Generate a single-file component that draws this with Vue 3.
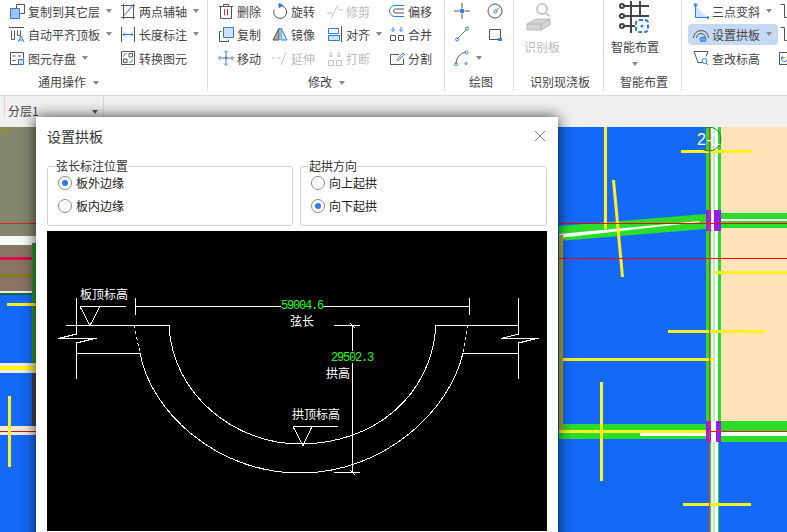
<script setup>
const D = '#555'
const B = '#2b7de9'
const L = '#cfe2fa'
const G = '#c4c4c4'

// [stroke, path, fill]
const icons = {
  copyLayer: [[D, 'M7.5 1.5h8v9h-8z'], [B, 'M1.5 5.5h9v10h-9z', '#9cc4f5']],
  twoAxis: [[D, 'M1 2.5h14M1 14.5h14M3.5 1v15M13.5 1v15'], [B, 'M2 15L14 1']],
  autoFlush: [[D, 'M0 1.5h15M2.5 4.5v9h3v-9M8.5 4.5v5h3v-5'], [B, 'M9 16l3-6 3 6M10 14h4']],
  length: [[D, 'M1.5 1v15M14.5 1v15'], [B, 'M3 8.5h10M5 6.5l-2 2 2 2M11 6.5l2 2-2 2']],
  saveEl: [[D, 'M1.5 2.5h13v6M9 14.5H1.5v-12M3.5 6h3M9 6h3M3.5 10.5h3'], [B, 'M9.5 9.5h5v5h-5z', L]],
  convert: [[D, 'M1.5 1.5h13v13h-13zM9 3.5h3.5V7H9zM3.5 9H7v3.5H3.5z'], [B, 'M3.5 6.5a3 3 0 0 1 3-3M12.5 9.5a3 3 0 0 1-3 3']],
  del: [[D, 'M1 3.5h14M5.5 3V1.5h5V3M2.5 3.5v12h11v-12'], ['#e0343c', 'M6.5 6v6.5M9.5 6v6.5']],
  rotate: [[D, 'M8.5 2.5a6.5 6.5 0 1 1-6.3 4'], [B, 'M7 .5l4 2-4 2z', B]],
  trim: [[G, 'M0 10h5M4 15L11 2M11 7h5']],
  offset: [[B, 'M15 2.5H6a5.5 5.5 0 0 0 0 11h9'], [D, 'M15 6H6.5a2 2 0 0 0 0 4H15']],
  copy: [[D, 'M3.5 5.5h-2v10h9v-2'], [B, 'M5.5 1.5h10v10h-10z', L]],
  mirror: [[D, 'M7 2L1 14h6z', '#aaa'], [B, 'M9 2l6 12H9z', L]],
  align: [[B, 'M1.5 2.5h10v5h-10z'], [B, 'M1.5 9.5h11v5h-11z', L], [D, 'M14.5 0v16']],
  merge: [[D, 'M1.5 9.5h5v5h-5zM9.5 9.5h5v5h-5z'], [B, 'M4 1v4M2 3.5l2 2 2-2M12 1v4M10 3.5l2 2 2-2']],
  move: [[B, 'M8 2v4M8 10v4M2 8h4M10 8h4M6 2.5L8 .5l2 2M6 13.5l2 2 2-2M2.5 6l-2 2 2 2M13.5 6l2 2-2 2'], [D, 'M6 8h4M8 6v4']],
  extend: [[G, 'M0 8h3M5 8h4M9 15L14 2']],
  breakEl: [[G, 'M1.5 10.5h5v5h-5zM9.5 10.5h5v5h-5zM4 2v5M2 5l2 2 2-2M12 2v5M10 5l2 2 2-2']],
  split: [[D, 'M10 4.5H1.5v10h13v-6'], [B, 'M8 10l6-7 1.5 1.5-6 6z']],
  point: [[D, 'M8 0v5M8 11v5M0 8h5M11 8h5'], [B, 'M6 8a2 2 0 1 0 4 0a2 2 0 1 0-4 0', B]],
  circle: [[D, 'M1 8a7 7 0 1 0 14 0a7 7 0 1 0-14 0'], [B, 'M7 8.5a1.5 1.5 0 1 0 3 0a1.5 1.5 0 1 0-3 0M9 7.5l3-3']],
  line: [[B, 'M3 13L13 3M1.5 13.5a1.5 1.5 0 1 0 3 0a1.5 1.5 0 1 0-3 0M11.5 2.5a1.5 1.5 0 1 0 3 0a1.5 1.5 0 1 0-3 0']],
  rect: [[D, 'M2.5 3.5h11v10h-11z'], [B, 'M11.5 12.5h3v2h-3z', B]],
  arc: [[D, 'M2 14C2 8 6 3 12 2'], [B, 'M.5 14.5a1.5 1.5 0 1 0 3 0a1.5 1.5 0 1 0-3 0M11 2.5a1.5 1.5 0 1 0 3 0a1.5 1.5 0 1 0-3 0M11 13.5a1 1 0 1 0 2 0a1 1 0 1 0-2 0']],
  threePoint: [['none', 'M3 3l11 11H3z', L], [B, 'M2.5 1v13.5h13M1 2a1 1 0 1 0 3 0a1 1 0 1 0-3 0M14 14.5a1 1 0 1 0 2 0a1 1 0 1 0-2 0']],
  setArch: [[D, 'M.5 12a7.5 7.5 0 0 1 15 0M3.5 12a4.5 4.5 0 0 1 9 0'], [B, 'M7 13.5a3 2.5 0 1 0 6 0a3 2.5 0 1 0-6 0', '#6fa5ec']],
  editElev: [[D, 'M1 1.5h14l-2 5M1 1.5l4 11h4'], [B, 'M9 11a2.5 2.5 0 1 0 5 0a2.5 2.5 0 1 0-5 0M13 13l2 2']],
  stairA: [[D, 'M2.5 1.5h4v13h8']],
  stairB: [[D, 'M2.5 1.5h4v13h8']],
  box: [[D, 'M1.5 2.5h12v12h-12zM3.5 8h3'], [B, 'M5 6a3 3 0 1 0 4 4']],
}

const general = [
  { icon: 'copyLayer', text: '复制到其它层', caret: true },
  { icon: 'twoAxis', text: '两点辅轴', caret: true },
  { icon: 'autoFlush', text: '自动平齐顶板', caret: true },
  { icon: 'length', text: '长度标注', caret: true },
  { icon: 'saveEl', text: '图元存盘', caret: true },
  { icon: 'convert', text: '转换图元' },
]
const modify = [
  { icon: 'del', text: '删除' },
  { icon: 'rotate', text: '旋转' },
  { icon: 'trim', text: '修剪', off: true },
  { icon: 'offset', text: '偏移' },
  { icon: 'copy', text: '复制' },
  { icon: 'mirror', text: '镜像' },
  { icon: 'align', text: '对齐', caret: true },
  { icon: 'merge', text: '合并' },
  { icon: 'move', text: '移动' },
  { icon: 'extend', text: '延伸', off: true },
  { icon: 'breakEl', text: '打断', off: true },
  { icon: 'split', text: '分割' },
]
const draw = [
  { icon: 'point' },
  { icon: 'circle' },
  { icon: 'line' },
  { icon: 'rect' },
  { icon: 'arc', caret: true },
]
const arch = [
  { icon: 'threePoint', text: '三点变斜', caret: true },
  { icon: 'stairA' },
  { icon: 'setArch', text: '设置拱板', caret: true, active: true },
  { icon: 'stairB' },
  { icon: 'editElev', text: '查改标高' },
  { icon: 'box' },
]
const groups = [
  { cls: 'g-general', items: general, title: '通用操作', caret: true },
  { cls: 'g-modify', items: modify, title: '修改', caret: true },
  { cls: 'g-draw', items: draw, title: '绘图' },
]
const fieldsets = [
  { legend: '弦长标注位置', options: [{ text: '板外边缘', on: true }, { text: '板内边缘' }] },
  { legend: '起拱方向', options: [{ text: '向上起拱' }, { text: '向下起拱', on: true }] },
]
</script>

<template>
  <div class="page">
    <div class="ribbon">
      <section v-for="g in groups" :key="g.title" class="group" :class="g.cls">
        <div class="items">
          <div v-for="(it, i) in g.items" :key="i" class="item" :class="{ off: it.off }">
            <svg class="ico" viewBox="0 0 16 16">
              <path v-for="(p, j) in icons[it.icon]" :key="j" :stroke="p[0]" :d="p[1]" :fill="p[2] || 'none'" />
            </svg>
            <span v-if="it.text">{{ it.text }}</span>
            <i v-if="it.caret" class="caret"></i>
          </div>
        </div>
        <div class="title">{{ g.title }}<i v-if="g.caret" class="caret title-caret"></i></div>
      </section>

      <section class="group g-recog">
        <div class="big off">
          <svg width="36" height="34" viewBox="0 0 36 34">
            <circle cx="18" cy="9" r="5" fill="none" stroke="#c8c8c8" stroke-width="2" />
            <path d="M22 13l3 3" stroke="#c8c8c8" stroke-width="2" />
            <path d="M3 24l9-5h14l-9 5zM3 24h14v6H3zM17 24l9-5v6l-9 5z" fill="#d4d4d4" stroke="#bbb" />
          </svg>
          <span>识别板</span>
        </div>
        <div class="title">识别现浇板</div>
      </section>

      <section class="group g-smart">
        <div class="big">
          <svg width="36" height="34" viewBox="0 0 36 34">
            <g fill="none" stroke="#444" stroke-width="2">
              <path d="M7 6h25M7 16h25M7 26h11M14 1v32M23 1v16" />
              <circle cx="5" cy="6" r="2" />
              <circle cx="5" cy="16" r="2" />
              <circle cx="5" cy="26" r="2" />
            </g>
            <rect x="19" y="20" width="12" height="12" rx="3" fill="#fff" stroke="#2b7de9" stroke-width="2" stroke-dasharray="4 2" />
            <circle cx="25" cy="26" r="1.5" fill="#2b7de9" />
          </svg>
          <span>智能布置</span>
          <i class="caret big-caret"></i>
        </div>
        <div class="title">智能布置</div>
      </section>

      <section class="group g-arch">
        <div class="items">
          <div v-for="(it, i) in arch" :key="i" class="item" :class="{ active: it.active }">
            <svg class="ico" viewBox="0 0 16 16">
              <path v-for="(p, j) in icons[it.icon]" :key="j" :stroke="p[0]" :d="p[1]" :fill="p[2] || 'none'" />
            </svg>
            <span v-if="it.text">{{ it.text }}</span>
            <i v-if="it.caret" class="caret"></i>
          </div>
        </div>
      </section>
    </div>

    <div class="toolbar">
      <div class="layer">分层1<i class="caret"></i></div>
    </div>

    <svg class="canvas" viewBox="0 127 787 405" width="787" height="405">
      <rect x="0" y="127" width="787" height="405" fill="#1469f8" />
      <!-- left of the dialog -->
      <rect x="0" y="127" width="36" height="109" fill="#85866e" />
      <rect x="0" y="130" width="10" height="3" fill="#8f8f30" />
      <rect x="0" y="223" width="36" height="1" fill="#d8202a" />
      <rect x="0" y="236" width="36" height="9" fill="#f4fbf8" />
      <rect x="0" y="245" width="36" height="46" fill="#8a7463" />
      <rect x="0" y="257" width="36" height="3" fill="#d0104a" />
      <rect x="0" y="274" width="36" height="3" fill="#807c20" />
      <rect x="0" y="291" width="36" height="2" fill="#e8efe8" />
      <rect x="0" y="293" width="36" height="2" fill="#1c6a28" />
      <rect x="32" y="243" width="4" height="122" fill="#2a9a30" />
      <rect x="7" y="303" width="29" height="3" fill="#fff01e" />
      <rect x="0" y="363" width="36" height="10" fill="#f1ead8" />
      <rect x="0" y="366" width="36" height="4" fill="#fff21e" />
      <rect x="32" y="373" width="4" height="53" fill="#44464e" />
      <rect x="0" y="426" width="36" height="9" fill="#f8e8d0" />
      <rect x="0" y="431" width="36" height="1" fill="#b02020" />
      <rect x="8" y="396" width="3" height="71" fill="#fff01e" />

      <!-- right of the dialog -->
      <rect x="721" y="127" width="66" height="294" fill="#fde3b7" />
      <rect x="706" y="127" width="15" height="315" fill="#2bdc2b" />
      <rect x="711" y="127" width="7" height="405" fill="#fff" />
      <rect x="713" y="127" width="2" height="405" fill="#b8f0b8" />
      <rect x="709" y="442" width="2" height="90" fill="#2bdc2b" />
      <rect x="718" y="442" width="1" height="90" fill="#2bdc2b" />
      <polygon points="559,226 706,214 706,229 559,241" fill="#2bdc2b" />
      <polygon points="559,234 700,221 700,222 559,238" fill="#fff" />
      <rect x="721" y="213" width="66" height="15" fill="#2bdc2b" />
      <rect x="721" y="219" width="66" height="2" fill="#fff" />
      <rect x="706" y="210" width="15" height="21" fill="#9a1cf0" />
      <rect x="711" y="210" width="3" height="21" fill="#fff" />
      <rect x="559" y="424" width="147" height="15" fill="#2bdc2b" />
      <rect x="721" y="421" width="66" height="21" fill="#2bdc2b" />
      <rect x="640" y="432" width="147" height="4" fill="#fff" />
      <rect x="559" y="430" width="150" height="3" fill="#fff21e" />
      <rect x="706" y="421" width="15" height="21" fill="#9a1cf0" />
      <rect x="711" y="421" width="5" height="21" fill="#fff" />
      <rect x="604" y="127" width="3" height="102" fill="#fff21e" />
      <polygon points="612,180 615,180 624,277 621,277" fill="#fff21e" />
      <rect x="681" y="150" width="71" height="3" fill="#fff21e" />
      <rect x="714" y="271" width="73" height="3" fill="#fff21e" />
      <rect x="668" y="330" width="97" height="3" fill="#fff21e" />
      <rect x="559" y="358" width="155" height="3" fill="#fff21e" />
      <rect x="600" y="382" width="3" height="99" fill="#fff21e" />
      <rect x="683" y="503" width="68" height="3" fill="#fff21e" />
      <rect x="559" y="235" width="4" height="195" fill="#b5a92c" />
      <rect x="559" y="223" width="228" height="1" fill="#f00" />
      <rect x="559" y="258" width="228" height="1" fill="#f00" />
      <rect x="709" y="431" width="78" height="1" fill="#e02020" />
      <rect x="709" y="127" width="1" height="405" fill="#e0402a" />
      <circle cx="709" cy="139" r="12" fill="none" stroke="#128a3a" />
      <text x="697" y="145" class="axis-label">2-1</text>
    </svg>

    <div class="dialog">
      <header class="dialog-head">
        <span>设置拱板</span>
        <svg width="12" height="12" viewBox="0 0 12 12"><path d="M1 1l10 10M11 1L1 11" stroke="#777" fill="none" /></svg>
      </header>
      <div class="options">
        <fieldset v-for="f in fieldsets" :key="f.legend">
          <legend>{{ f.legend }}</legend>
          <label v-for="o in f.options" :key="o.text" class="radio">
            <span class="dot" :class="{ on: o.on }"></span>{{ o.text }}
          </label>
        </fieldset>
      </div>
      <svg class="diagram" viewBox="47 231 500 300" width="500" height="300">
        <g fill="none" stroke="#fff" stroke-width="1">
          <!-- left stub -->
          <path d="M76.5 298v36l-16 4h-3 39l-20 5v36" />
          <path d="M66 325.5h103M76 353.5h64" />
          <path d="M80 306.5h46M80 306.5l10 19 10-19" />
          <!-- right stub -->
          <path d="M518.5 298v36l-15 4h-3 38l-20 5v36" />
          <path d="M436 325.5h82M463 353.5h55" />
          <!-- chord dimension -->
          <path d="M135 306.5h335M135.5 298v17M469.5 298v17" />
          <!-- arcs -->
          <path d="M169 325C172 395 235 444 300 444C375 444 432 395 436 325" />
          <path d="M140 353C150 410 215 473 300 473C385 473 450 410 463 353" />
          <path d="M134 325L140 353M468 325L463 353" stroke-dasharray="3 3" />
          <!-- crown mark -->
          <path d="M293 426.5h45M293 426.5l10 19 9-19" />
          <!-- rise dimension -->
          <path d="M352.5 325v148M334 325.5h26M334 472.5h26M350 323l5 5M350 470l5 5" />
        </g>
        <rect x="281" y="300" width="42" height="12" fill="#000" />
        <rect x="331" y="351" width="42" height="12" fill="#000" />
        <text x="281" y="309" class="dim">59004.6</text>
        <text x="331" y="361" class="dim">29502.3</text>
        <text x="80" y="299" class="note">板顶标高</text>
        <text x="290" y="326" class="note">弦长</text>
        <text x="326" y="378" class="note">拱高</text>
        <text x="292" y="419" class="note">拱顶标高</text>
      </svg>
    </div>
  </div>
</template>

<style>
html, body {
  margin: 0;
  background: #fff;
}
</style>

<style scoped>
.page {
  position: relative;
  width: 787px;
  height: 532px;
  overflow: hidden;
  font-family: "Noto Sans CJK SC", "Noto Sans", sans-serif;
  font-size: 12px;
  color: #444;
  background: #f0f0f0;
}
.ribbon {
  display: flex;
  height: 95px;
  background: #fff;
  border-bottom: 1px solid #dcdcdc;
}
.group {
  box-sizing: border-box;
  flex: none;
  height: 91px;
  border-right: 1px solid #dcdcdc;
  display: flex;
  flex-direction: column;
}
.g-general { width: 208px; padding-left: 9px; }
.g-modify { width: 237px; padding-left: 10px; }
.g-draw { width: 69px; padding-left: 9px; }
.g-recog { width: 90px; padding-left: 10px; }
.g-smart { width: 78px; padding-left: 7px; }
.g-arch { width: 105px; padding-left: 11px; border-right: 0; }
.items {
  display: grid;
  grid-template-rows: 22px 24px 24px;
  height: 73px;
  align-items: center;
}
.g-general .items { grid-template-columns: 111px 1fr; }
.g-modify .items { grid-template-columns: 54px 55px 62px 1fr; }
.g-draw .items { grid-template-columns: 33px 1fr; }
.g-arch .items { grid-template-columns: 85px 9px; }
.item {
  display: flex;
  align-items: center;
  gap: 3px;
  white-space: nowrap;
  color: #444;
}
.item.off, .big.off { color: #bbb; }
.item.active {
  height: 21px;
  margin-left: -5px;
  padding-left: 5px;
  background: #c5daf2;
  border-radius: 4px;
}
.ico {
  width: 16px;
  height: 16px;
  flex: none;
}
.caret {
  display: inline-block;
  width: 0;
  height: 0;
  margin-left: 3px;
  border-left: 3px solid transparent;
  border-right: 3px solid transparent;
  border-top: 4px solid #888;
}
.title {
  height: 18px;
  line-height: 18px;
  white-space: nowrap;
}
.g-general .title { padding-left: 29px; }
.g-modify .title { padding-left: 90px; }
.g-draw .title { padding-left: 15px; }
.g-recog .title { padding-left: 6px; }
.g-smart .title { padding-left: 9px; }
.title-caret { margin-left: 7px; vertical-align: 2px; }
.big {
  height: 73px;
  display: flex;
  flex-direction: column;
  align-items: center;
  width: 48px;
}
.big svg { flex: none; }
.big span { line-height: 16px; margin-top: 5px; white-space: nowrap; }
.big-caret { margin: 7px 0 0; }
.g-recog .big { width: 36px; }
.toolbar {
  height: 31px;
  background: #f0f0f0;
}
.layer {
  width: 100px;
  height: 21px;
  margin-left: 4px;
  padding-left: 3px;
  box-sizing: border-box;
  line-height: 30px;
  border-left: 1px solid #d8d8d8;
  border-right: 1px solid #d8d8d8;
  position: relative;
}
.layer .caret {
  position: absolute;
  right: 5px;
  top: 14px;
  margin: 0;
  border-top-color: #555;
}
.canvas {
  display: block;
}
.axis-label {
  font-family: "Liberation Sans", sans-serif;
  font-size: 16px;
  fill: #fff;
}
.dialog {
  position: absolute;
  left: 36px;
  top: 117px;
  box-sizing: border-box;
  width: 522px;
  height: 430px;
  padding: 0 11px;
  background: #fff;
  box-shadow: 0 0 14px rgba(0, 0, 0, .75);
}
.dialog-head {
  display: flex;
  justify-content: space-between;
  align-items: center;
  height: 38px;
  margin-bottom: 3px;
  font-size: 14px;
  color: #333;
}
.dialog-head svg { margin-right: 1px; }
.options {
  display: grid;
  grid-template-columns: 246px 247px;
  gap: 7px;
  margin-bottom: 5px;
}
fieldset {
  box-sizing: border-box;
  height: 68px;
  margin: 0;
  padding: 0 10px;
  border: 1px solid #cfcfcf;
  border-radius: 3px;
  min-width: 0;
}
legend {
  padding: 0;
  margin-left: -2px;
  line-height: 16px;
  color: #333;
}
.radio {
  display: flex;
  align-items: center;
  gap: 4px;
  height: 23px;
  color: #222;
}
.radio:first-of-type { margin-top: -3px; }
.dot {
  box-sizing: border-box;
  width: 14px;
  height: 14px;
  border: 1px solid #8a8a8a;
  border-radius: 50%;
  background: #fff;
  display: flex;
  align-items: center;
  justify-content: center;
}
.dot.on::after {
  content: "";
  width: 6px;
  height: 6px;
  border-radius: 50%;
  background: #2b7de9;
}
.diagram {
  display: block;
  background: #000;
  shape-rendering: crispEdges;
}
.dim {
  font-family: "Liberation Mono", monospace;
  font-size: 12px;
  letter-spacing: -1.2px;
  fill: #1eff1e;
}
.note {
  font-size: 12px;
  fill: #fff;
}
</style>
